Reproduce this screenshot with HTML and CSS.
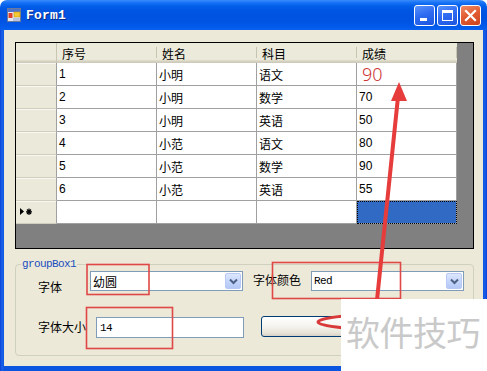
FILE: index.html
```html
<!DOCTYPE html>
<html>
<head>
<meta charset="utf-8">
<title>Form1</title>
<link rel="stylesheet" href="styles.css">
</head>
<body>
<div class="window">
  <div class="titlebar">
    <svg class="app-icon" width="14" height="14" viewBox="0 0 14 14">
      <rect x="0.5" y="0.5" width="13" height="13" fill="#e8e8f0" stroke="#6b7a99"/>
      <rect x="1" y="1" width="12" height="3" fill="#4f73c9"/>
      <rect x="7" y="4" width="6" height="5" fill="#f3c832" stroke="#c49a12" stroke-width="0.6"/>
      <rect x="1.5" y="5" width="4" height="5" fill="#e0412a"/>
      <rect x="6" y="10" width="7" height="3" fill="#b9c4dc"/>
    </svg>
    <span class="title">Form1</span>
    <div class="caption-buttons">
      <span class="cbtn min"><i></i></span>
      <span class="cbtn max"><i></i></span>
      <span class="cbtn close">
        <svg width="19" height="19" viewBox="0 0 19 19"><path d="M5 5 L14 14 M14 5 L5 14" stroke="#fff" stroke-width="2.2" stroke-linecap="square"/></svg>
      </span>
    </div>
  </div>
  <div class="frame">
    <div class="client">
      <div class="dgv">
        <div class="grid">
          <div class="hc corner"></div>
          <div class="hc">序号</div>
          <div class="hc">姓名</div>
          <div class="hc">科目</div>
          <div class="hc">成绩</div>

          <div class="rh"></div>
          <div class="c">1</div><div class="c">小明</div><div class="c">语文</div><div class="c big">90</div>

          <div class="rh"></div>
          <div class="c">2</div><div class="c">小明</div><div class="c">数学</div><div class="c">70</div>

          <div class="rh"></div>
          <div class="c">3</div><div class="c">小明</div><div class="c">英语</div><div class="c">50</div>

          <div class="rh"></div>
          <div class="c">4</div><div class="c">小范</div><div class="c">语文</div><div class="c">80</div>

          <div class="rh"></div>
          <div class="c">5</div><div class="c">小范</div><div class="c">数学</div><div class="c">90</div>

          <div class="rh"></div>
          <div class="c">6</div><div class="c">小范</div><div class="c">英语</div><div class="c">55</div>

          <div class="rh newrow">
            <svg width="14" height="8" viewBox="0 0 14 8">
              <path d="M0 0 L4 3.5 L0 7 Z" fill="#000"/>
              <path d="M9 0.5 V7 M6 3.8 H12 M7 1.5 L11 6 M11 1.5 L7 6" stroke="#000" stroke-width="1.2"/>
            </svg>
          </div>
          <div class="c"></div><div class="c"></div><div class="c"></div><div class="c sel"></div>
        </div>
      </div>

      <fieldset class="group">
        <legend>groupBox1</legend>
        <div class="row r1">
          <span class="lbl l-font">字体</span>
          <div class="combo"><span class="cv cjk">幼圆</span><span class="drop"><svg width="9" height="7" viewBox="0 0 9 7"><path d="M1 1.5 L4.5 5 L8 1.5" stroke="#4d6185" stroke-width="2" fill="none"/></svg></span></div>
          <span class="lbl l-color">字体颜色</span>
          <div class="combo"><span class="cv">Red</span><span class="drop"><svg width="9" height="7" viewBox="0 0 9 7"><path d="M1 1.5 L4.5 5 L8 1.5" stroke="#4d6185" stroke-width="2" fill="none"/></svg></span></div>
        </div>
        <div class="row r2">
          <span class="lbl l-size">字体大小</span>
          <div class="textbox">14</div>
          <button class="btn" aria-label="button1"></button>
        </div>
      </fieldset>
    </div>
  </div>

  <svg class="annot" width="487" height="371" viewBox="0 0 487 371">
    <rect x="87" y="264.5" width="62" height="30" fill="none" stroke="#e04848" stroke-width="1.6"/>
    <rect x="272.5" y="262.5" width="128" height="36" fill="none" stroke="#e04848" stroke-width="1.6"/>
    <rect x="86.5" y="307.5" width="86" height="41" fill="none" stroke="#e04848" stroke-width="1.6"/>
    <ellipse cx="400" cy="322" rx="82" ry="8" fill="none" stroke="#d83a3a" stroke-width="3"/>
    <line x1="377" y1="300" x2="398" y2="97" stroke="#e63c3c" stroke-width="4" stroke-linecap="round"/>
    <polygon points="399,82 391,101 407,101" fill="#e63c3c"/>
  </svg>
  <div class="watermark">软件技巧</div>
</div>
</body>
</html>
```

FILE: styles.css
```css
* { box-sizing: border-box; }
html, body { margin: 0; padding: 0; }
body {
  width: 487px;
  height: 371px;
  overflow: hidden;
  background: #ffffff;
  font-family: "Liberation Sans", "Noto Sans CJK SC", sans-serif;
  font-size: 12px;
  color: #000;
}

.window {
  position: relative;
  width: 487px;
  height: 371px;
  display: flex;
  flex-direction: column;
}

/* ---------- title bar ---------- */
.titlebar {
  height: 30px;
  flex: none;
  display: flex;
  align-items: center;
  padding: 0 6px 0 7px;
  border-radius: 7px 7px 0 0;
  background: linear-gradient(180deg,
    #3b8cf7 0px, #2c82f9 1px, #1470f5 3px, #035fe9 6px,
    #0056e2 10px, #0053e0 16px, #0054e3 22px, #0059ea 26px, #0a60ef 30px);
}
.app-icon { flex: none; }
.title {
  margin-left: 5px;
  color: #fff;
  font-family: "Liberation Mono", monospace;
  font-weight: bold;
  font-size: 13px;
  text-shadow: 1px 1px 0 #0a2a80;
  letter-spacing: 0.2px;
}
.caption-buttons {
  margin-left: auto;
  align-self: flex-start;
  margin-top: 5px;
  display: flex;
  gap: 2px;
}
.cbtn {
  position: relative;
  width: 21px;
  height: 21px;
  border: 1px solid #fff;
  border-radius: 3px;
  background: linear-gradient(160deg, #5a93fb 0%, #2f6cf2 45%, #1c55de 100%);
  display: flex;
  align-items: center;
  justify-content: center;
}
.cbtn.min i {
  position: absolute;
  left: 5px;
  bottom: 4px;
  width: 7px;
  height: 3px;
  background: #fff;
}
.cbtn.max i {
  width: 11px;
  height: 11px;
  border: 1px solid #fff;
  border-top-width: 3px;
}
.cbtn.close {
  background: linear-gradient(160deg, #f08a66 0%, #e25d33 45%, #cc4420 100%);
}

/* ---------- frame ---------- */
.frame {
  flex: 1;
  display: flex;
  padding: 0 4px 5px 4px;
  background: linear-gradient(90deg, #0a3fd4 0px, #1a62ea 2px, #0c55e0 4px, #0c55e0 483px, #1a5ee8 485px, #0a3fd4 487px);
}
.client {
  flex: 1;
  background: #ece9d8;
  padding: 12px 0 0 11px;
  display: flex;
  flex-direction: column;
}

/* ---------- data grid ---------- */
.dgv {
  width: 459px;
  height: 207px;
  border: 1px solid #000;
  background: #808080;
}
.grid {
  display: grid;
  grid-template-columns: 41px repeat(4, 100px);
  grid-template-rows: 20px repeat(7, 23px);
  width: 441px;
}
.hc {
  position: relative;
  display: flex;
  align-items: center;
  padding-left: 5px;
  font-family: "Noto Sans CJK SC", sans-serif;
  font-size: 12px;
  background: linear-gradient(180deg, #ebeadb 0%, #ebeadb 82%, #e2decd 86%, #d6d2c2 92%, #cbc7b8 100%);
}
.hc::after {
  content: "";
  position: absolute;
  right: 0;
  top: 4px;
  height: 11px;
  width: 1px;
  background: #c7c5b2;
}
.hc.corner::after { display: none; }
.corner { border-right: 1px solid #c9c6b6; }

.rh {
  background: #ebe9d9;
  border-right: 1px solid #a0a0a0;
  border-bottom: 1px solid #d2cebd;
  box-shadow: inset 0 1px 0 #f8f7f1;
  display: flex;
  align-items: center;
  padding-left: 4px;
}
.c {
  background: #fff;
  border-right: 1px solid #a0a0a0;
  border-bottom: 1px solid #a0a0a0;
  display: flex;
  align-items: center;
  padding-left: 2px;
  white-space: nowrap;
}
.c.big {
  color: #cf3434;
  font-family: "Noto Sans", sans-serif;
  font-weight: 300;
  font-size: 18px;
  padding-left: 5px;
}
.c.sel {
  background: #316ac5;
  outline: 1px dotted #000;
  outline-offset: -1px;
}

/* ---------- group box ---------- */
.group {
  width: 459px;
  height: 98px;
  margin: 9px 0 0 0;
  padding: 1px 0 0 0;
  border: 1px solid #d0d0bf;
  border-radius: 4px;
  min-width: 0;
}
.group legend {
  margin-left: 5px;
  padding: 0 1px;
  font-family: "Liberation Mono", monospace;
  font-size: 11px;
  letter-spacing: -0.6px;
  line-height: 12px;
  color: #1a4ec0;
}
.row {
  display: flex;
  align-items: flex-start;
}
.lbl {
  font-family: "Noto Sans CJK SC", sans-serif;
  font-size: 12px;
  line-height: 17px;
  white-space: nowrap;
}
.l-font { margin-left: 22px; width: 52px; padding-top: 7px; }
.l-color { margin-left: 10px; width: 58px; padding-top: 0; }
.l-size { margin-left: 22px; width: 58px; padding-top: 2px; }

.combo {
  width: 153px;
  height: 20px;
  border: 1px solid #7f9db9;
  background: #fff;
  display: flex;
  align-items: center;
  padding-left: 2px;
}
.cv {
  font-family: "Liberation Mono", monospace;
  font-size: 11px;
  letter-spacing: -0.6px;
}
.cv.cjk {
  font-family: "Noto Sans CJK SC", sans-serif;
  font-size: 12px;
  letter-spacing: 0;
}
.drop {
  margin-left: auto;
  margin-right: 1px;
  width: 16px;
  height: 16px;
  border: 1px solid #b7c9f4;
  border-radius: 2px;
  background: linear-gradient(180deg, #dde7fe 0%, #c6d6fb 50%, #b4c8f6 100%);
  display: flex;
  align-items: center;
  justify-content: center;
}

.r2 { margin-top: 21px; }
.textbox {
  width: 148px;
  height: 21px;
  margin-top: 1px;
  border: 1px solid #7f9db9;
  background: #fff;
  display: flex;
  align-items: center;
  padding-left: 3px;
  font-family: "Liberation Mono", monospace;
  font-size: 11px;
  letter-spacing: -0.6px;
}
.btn {
  margin-left: 17px;
  width: 196px;
  height: 21px;
  border: 1px solid #003c74;
  border-radius: 3px;
  background: linear-gradient(180deg, #ffffff 0%, #f4f3ee 50%, #e6e3d6 85%, #d6d0c5 100%);
  padding: 0;
}

/* ---------- overlays ---------- */
.annot {
  position: absolute;
  left: 0;
  top: 0;
  pointer-events: none;
}
.watermark {
  position: absolute;
  left: 341px;
  top: 299px;
  width: 146px;
  height: 72px;
  background: #fff;
  color: #c9c9c9;
  font-family: "Noto Sans CJK SC", sans-serif;
  font-size: 34px;
  line-height: 34px;
  padding: 16px 0 0 5px;
  white-space: nowrap;
  letter-spacing: -0.5px;
}
```
